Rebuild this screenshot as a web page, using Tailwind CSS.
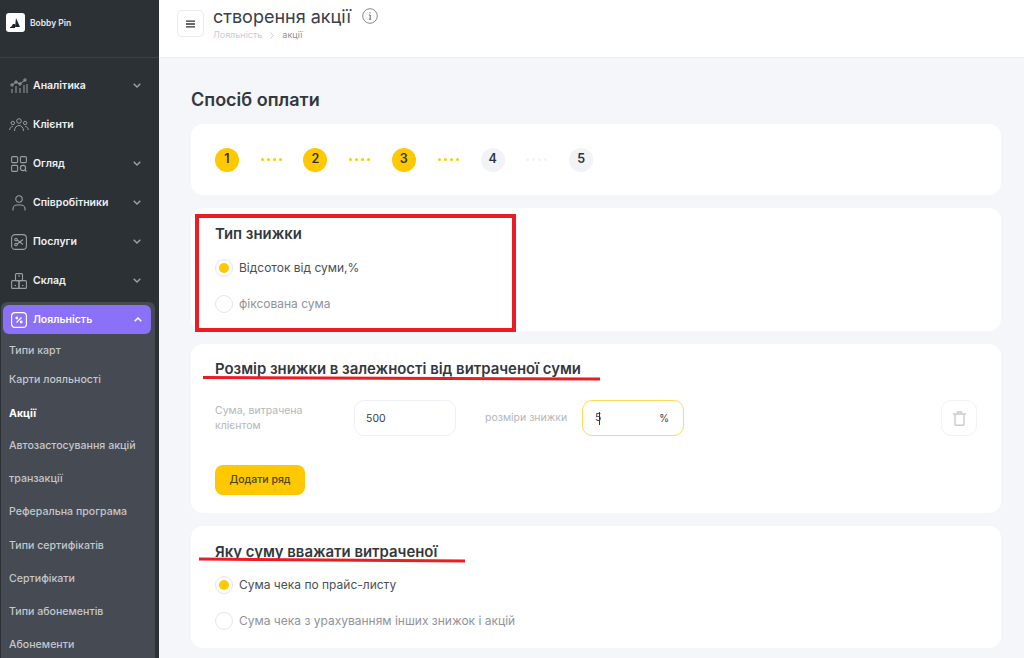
<!DOCTYPE html>
<html lang="uk">
<head>
<meta charset="utf-8">
<script src="https://cdn.jsdelivr.net/npm/@tailwindcss/browser@4"></script>
</head>
<body class="m-0 overflow-hidden font-['Inter','Noto_Sans',sans-serif]">
<div class="relative flex w-[1024px] h-[658px] overflow-hidden bg-[#f4f6fa]">
  <aside class="w-[159px] shrink-0 h-full bg-[#2c3136] overflow-hidden">
    <div class="h-[58px] border-b border-[#3d4248] flex items-center pl-[6px] pb-[12px] gap-[5px]">
      <div class="w-[19px] h-[19px] rounded-[3px] bg-white flex items-center justify-center">
        <svg width="13" height="12" viewBox="0 0 13 12"><path d="M7 1 L11 10 H6 Z M1 10 H6 V11 H1 Z M4 7 L6 7 L6 10 L2 10 Z" fill="#22262b"/></svg>
      </div>
      <span class="text-[8.5px] font-semibold text-[#e6e7e9] mt-[2px]">Bobby Pin</span>
    </div>
    <nav class="pt-[8px]">
      <div class="h-[39px] flex items-center pl-[10px] pr-[18px] text-[#eef0f2] text-[10.5px] font-semibold">
        <svg class="w-[19px] h-[16px] mr-[4px]" viewBox="0 0 19 16" fill="none" stroke="#9a9ea3" stroke-width="1"><path d="M2 7 L6 4 L10 6 L15 2"/><circle cx="2" cy="7" r="1.2"/><circle cx="6" cy="4" r="1.2"/><circle cx="10" cy="6" r="1.2"/><circle cx="15" cy="2" r="1.2"/><path d="M2 11V15M6 8V15M10 10V15M14 7V15M17 6V15"/></svg>
        <span class="flex-1">Аналітика</span>
        <svg width="8" height="5" viewBox="0 0 8 5" fill="none" stroke="#a0a4a8" stroke-width="1.3"><path d="M.7.7 4 4 7.3.7"/></svg>
      </div>
      <div class="h-[39px] flex items-center pl-[9px] pr-[18px] text-[#eef0f2] text-[10.5px] font-semibold">
        <svg class="w-[20px] h-[14px] mr-[4px]" viewBox="0 0 20 14" fill="none" stroke="#9a9ea3" stroke-width="1"><circle cx="10" cy="3" r="2.3"/><circle cx="3.8" cy="5" r="1.7"/><circle cx="16.2" cy="5" r="1.7"/><path d="M5.5 13C5.5 9.5 7.5 7.5 10 7.5S14.500 9.500 14.500 13M.7 12C.7 10 2 8.500 3.800 8.500M19.300 12C19.300 10 18 8.500 16.200 8.500"/></svg>
        <span class="flex-1">Клієнти</span>
      </div>
      <div class="h-[39px] flex items-center pl-[11px] pr-[18px] text-[#eef0f2] text-[10.5px] font-semibold">
        <svg class="w-[16px] h-[16px] mr-[6px]" viewBox="0 0 16 16" fill="none" stroke="#9a9ea3" stroke-width="1.1"><rect x=".6" y=".6" width="6" height="6" rx="1.200"/><rect x="9.400" y=".6" width="6" height="6" rx="1.200"/><rect x=".6" y="9.400" width="6" height="6" rx="1.200"/><circle cx="12" cy="12" r="2.600"/><path d="M14 14l1.500 1.500"/></svg>
        <span class="flex-1">Огляд</span>
        <svg width="8" height="5" viewBox="0 0 8 5" fill="none" stroke="#a0a4a8" stroke-width="1.3"><path d="M.7.7 4 4 7.3.7"/></svg>
      </div>
      <div class="h-[39px] flex items-center pl-[12px] pr-[18px] text-[#eef0f2] text-[10.5px] font-semibold">
        <svg class="w-[14px] h-[16px] mr-[7px]" viewBox="0 0 14 16" fill="none" stroke="#9a9ea3" stroke-width="1.1"><circle cx="7" cy="4" r="3.200"/><path d="M1 15.500V14C1 11.500 3 10 5 10H9C11 10 13 11.500 13 14V15.500"/></svg>
        <span class="flex-1">Співробітники</span>
        <svg width="8" height="5" viewBox="0 0 8 5" fill="none" stroke="#a0a4a8" stroke-width="1.3"><path d="M.7.7 4 4 7.3.7"/></svg>
      </div>
      <div class="h-[39px] flex items-center pl-[11px] pr-[18px] text-[#eef0f2] text-[10.5px] font-semibold">
        <svg class="w-[16px] h-[16px] mr-[6px]" viewBox="0 0 16 16" fill="none" stroke="#9a9ea3" stroke-width="1.100"><rect x=".6" y=".6" width="14.800" height="14.800" rx="3.500"/><circle cx="5" cy="5.500" r="1.300"/><circle cx="5" cy="10.500" r="1.300"/><path d="M6.200 6 12 10.500M6.200 10 12 5.500"/></svg>
        <span class="flex-1">Послуги</span>
        <svg width="8" height="5" viewBox="0 0 8 5" fill="none" stroke="#a0a4a8" stroke-width="1.3"><path d="M.7.7 4 4 7.3.7"/></svg>
      </div>
      <div class="h-[39px] flex items-center pl-[11px] pr-[18px] text-[#eef0f2] text-[10.5px] font-semibold">
        <svg class="w-[16px] h-[16px] mr-[6px]" viewBox="0 0 16 16" fill="none" stroke="#9a9ea3" stroke-width="1.100"><rect x="4.500" y=".6" width="7" height="7" rx="1"/><rect x=".6" y="7.600" width="7.400" height="7.800" rx="1"/><rect x="8" y="7.600" width="7.400" height="7.800" rx="1"/><path d="M7 3h2M3.500 12.500h1.500M11 12.500h1.500"/></svg>
        <span class="flex-1">Склад</span>
        <svg width="8" height="5" viewBox="0 0 8 5" fill="none" stroke="#a0a4a8" stroke-width="1.3"><path d="M.7.7 4 4 7.3.7"/></svg>
      </div>
      <div class="w-[154px] mt-[2px] ml-[1px] bg-[#454a53] rounded-t-[6px] pt-[3px] pl-[2px] h-[360px]">
        <div class="w-[148px] h-[29px] rounded-[6px] bg-[#8b70f8] flex items-center pl-[8px] pr-[9px] text-white text-[10.5px] font-semibold">
          <svg class="w-[16px] h-[16px] mr-[6px]" viewBox="0 0 16 16" fill="none" stroke="#fff" stroke-width="1.200"><rect x=".6" y=".6" width="14.800" height="14.800" rx="3.500"/><path d="M5.500 10.500 10.500 5.500"/><circle cx="5.800" cy="6" r=".8"/><circle cx="10.200" cy="10" r=".8"/></svg>
          <span class="flex-1">Лояльність</span>
          <svg width="8" height="5" viewBox="0 0 8 5" fill="none" stroke="#fff" stroke-width="1.500"><path d="M.7 4.300 4 1 7.300 4.300"/></svg>
        </div>
        <div class="pl-[6px] text-[10.6px] font-medium text-[#c4c7cc]">
          <div class="h-[29px] mt-[2px] flex items-center">Типи карт</div>
          <div class="h-[29px] flex items-center">Карти лояльності</div>
          <div class="h-[33px] mt-[3px] -mb-[1px] flex items-center font-bold text-white">Акції</div>
          <div class="h-[33px] flex items-center">Автозастосування акцій</div>
          <div class="h-[33px] flex items-center">транзакції</div>
          <div class="h-[33px] flex items-center">Реферальна програма</div>
          <div class="h-[33px] mt-[1px] flex items-center">Типи сертифікатів</div>
          <div class="h-[33px] flex items-center">Сертифікати</div>
          <div class="h-[33px] flex items-center">Типи абонементів</div>
          <div class="h-[33px] flex items-center">Абонементи</div>
        </div>
      </div>
    </nav>
  </aside>
  <div class="flex-1 min-w-0">
    <header class="h-[58px] bg-white border-b border-[#eceef2] flex items-start pl-[18px]">
      <div class="w-[27px] h-[27px] mt-[10px] rounded-[5px] border border-[#e9ebef] flex items-center justify-center">
        <svg width="9" height="8" viewBox="0 0 9 8" stroke="#2f343a" stroke-width="1.300"><path d="M0 1.200H9M0 4H9M0 6.800H9"/></svg>
      </div>
      <div class="ml-[9px]">
        <div class="flex items-center h-[32px]">
          <span class="text-[18px] text-[#3a4047]">створення акції</span>
          <svg class="ml-[11px]" width="16" height="16" viewBox="0 0 16 16" fill="none"><circle cx="8" cy="8" r="7.300" stroke="#85898f" stroke-width="1"/><path d="M8 4.200V5.400M6.800 7H8.200V11M6.800 11.200H9.200" stroke="#62666c" stroke-width="1"/></svg>
        </div>
        <div class="-mt-[2px] flex items-center text-[9px] leading-[10px] text-[#c9ccd3]">
          <span>Лояльність</span>
          <svg class="mx-[8px]" width="4" height="7" viewBox="0 0 4 7" fill="none" stroke="#c9ccd3" stroke-width=".9"><path d="M.5.5 3.500 3.500 .5 6.500"/></svg>
          <span class="text-[#8d9198]">акції</span>
        </div>
      </div>
    </header>
    <main class="pl-[32px] pr-[23px]">
      <h1 class="h-[66px] pt-[31px] text-[18px] leading-[22px] font-semibold text-[#33383e]">Спосіб оплати</h1>
      <section class="h-[71px] rounded-[12px] bg-white pl-[24px] flex items-center">
        <div class="w-[24px] h-[24px] rounded-full bg-[#ffc800] text-[#2f343a] text-[12.5px] font-semibold flex items-center justify-center">1</div>
        <div class="w-[64.400px] flex justify-center gap-[3px]"><i class="w-[3px] h-[3px] bg-[#ffc800] rounded-full"></i><i class="w-[3px] h-[3px] bg-[#ffc800] rounded-full"></i><i class="w-[3px] h-[3px] bg-[#ffc800] rounded-full"></i><i class="w-[3px] h-[3px] bg-[#ffc800] rounded-full"></i></div>
        <div class="w-[24px] h-[24px] rounded-full bg-[#ffc800] text-[#2f343a] text-[12.5px] font-semibold flex items-center justify-center">2</div>
        <div class="w-[64.400px] flex justify-center gap-[3px]"><i class="w-[3px] h-[3px] bg-[#ffc800] rounded-full"></i><i class="w-[3px] h-[3px] bg-[#ffc800] rounded-full"></i><i class="w-[3px] h-[3px] bg-[#ffc800] rounded-full"></i><i class="w-[3px] h-[3px] bg-[#ffc800] rounded-full"></i></div>
        <div class="w-[24px] h-[24px] rounded-full bg-[#ffc800] text-[#2f343a] text-[12.5px] font-semibold flex items-center justify-center">3</div>
        <div class="w-[65px] flex justify-center gap-[3px]"><i class="w-[3px] h-[3px] bg-[#ffc800] rounded-full"></i><i class="w-[3px] h-[3px] bg-[#ffc800] rounded-full"></i><i class="w-[3px] h-[3px] bg-[#ffc800] rounded-full"></i><i class="w-[3px] h-[3px] bg-[#ffc800] rounded-full"></i></div>
        <div class="w-[24px] h-[24px] rounded-full bg-[#f1f3f7] text-[#2f343a] text-[12.5px] font-semibold flex items-center justify-center">4</div>
        <div class="w-[64.400px] flex justify-center gap-[3px]"><i class="w-[3px] h-[3px] bg-[#f1f3f7] rounded-full"></i><i class="w-[3px] h-[3px] bg-[#f1f3f7] rounded-full"></i><i class="w-[3px] h-[3px] bg-[#f1f3f7] rounded-full"></i><i class="w-[3px] h-[3px] bg-[#f1f3f7] rounded-full"></i></div>
        <div class="w-[24px] h-[24px] rounded-full bg-[#f1f3f7] text-[#2f343a] text-[12.5px] font-semibold flex items-center justify-center">5</div>
      </section>
      <section class="h-[123px] mt-[13px] rounded-[12px] bg-white pl-[24px] pt-[17px]">
        <h2 class="text-[14.9px] leading-[18px] font-semibold text-[#33383e]">Тип знижки</h2>
        <div class="mt-[16px] flex items-center gap-[6px] h-[18px] text-[12px] text-[#4a4f56]">
          <span class="w-[18px] h-[18px] rounded-full border border-[#e3e5ec] flex items-center justify-center"><i class="w-[10px] h-[10px] rounded-full bg-[#ffc800]"></i></span>Відсоток від суми,%
        </div>
        <div class="mt-[18px] flex items-center gap-[6px] h-[18px] text-[12px] text-[#8f939a]">
          <span class="w-[18px] h-[18px] rounded-full border border-[#e3e5ec]"></span>фіксована сума
        </div>
      </section>
      <section class="h-[169px] mt-[13px] rounded-[12px] bg-white pl-[24px] pr-[24px] pt-[16px]">
        <h2 class="text-[14.9px] leading-[18px] font-semibold text-[#33383e]">Розмір знижки в залежності від витраченої суми</h2>
        <div class="mt-[22px] flex items-center h-[36px]">
          <div class="w-[139px] text-[10.500px] leading-[15px] text-[#b3b6bc]">Сума, витрачена<br>клієнтом</div>
          <div class="w-[102px] h-[36px] rounded-[10px] border border-[#eef0f5] flex items-center pl-[11px] pt-[1px] text-[10.500px] text-[#3a4047]">500</div>
          <div class="ml-[29px] w-[97px] text-[10.500px] text-[#b3b6bc]">розміри знижки</div>
          <div class="w-[102px] h-[36px] rounded-[10px] border border-[#ffd85e] flex items-center pl-[12px] pr-[14px] text-[10.500px] text-[#3a4047]">
            <span>5</span><i class="w-px h-[13px] bg-[#2f343a] -ml-[2px]"></i><span class="ml-auto text-[10px]">%</span>
          </div>
          <div class="ml-auto w-[36px] h-[36px] rounded-[10px] border border-[#f0f2f5] flex items-center justify-center">
            <svg width="13" height="15" viewBox="0 0 13 15" fill="none" stroke="#c8ccd4" stroke-width="1.400"><path d="M0 3H13M4.500 3V1H8.500V3M2 3V13.200C2 13.800 2.500 14.300 3 14.300H10C10.500 14.300 11 13.800 11 13.200V3"/></svg>
          </div>
        </div>
        <button class="mt-[29px] w-[90px] h-[30px] rounded-[8px] bg-[#ffc800] text-[10.500px] font-medium text-[#4a4420]">Додати ряд</button>
      </section>
      <section class="h-[122px] mt-[13px] rounded-[12px] bg-white pl-[24px] pt-[17px]">
        <h2 class="text-[14.9px] leading-[18px] font-semibold text-[#33383e]">Яку суму вважати витраченої</h2>
        <div class="mt-[15px] flex items-center gap-[6px] h-[18px] text-[12px] text-[#4a4f56]">
          <span class="w-[18px] h-[18px] rounded-full border border-[#e3e5ec] flex items-center justify-center"><i class="w-[10px] h-[10px] rounded-full bg-[#ffc800]"></i></span>Сума чека по прайс-листу
        </div>
        <div class="mt-[18px] flex items-center gap-[6px] h-[18px] text-[12px] text-[#8f939a]">
          <span class="w-[18px] h-[18px] rounded-full border border-[#e3e5ec]"></span>Сума чека з урахуванням інших знижок і акцій
        </div>
      </section>
    </main>
  </div>
  <div class="absolute left-[195px] top-[214px] w-[321px] h-[118px] border-[4px] border-[#ec1c24]"></div>
  <svg class="absolute left-0 top-0 pointer-events-none" width="1024" height="658"><path d="M203 377.500 600 379" stroke="#ec1c24" stroke-width="3"/><path d="M199 559 465 561" stroke="#ec1c24" stroke-width="3"/></svg>
</div>
</body>
</html>
